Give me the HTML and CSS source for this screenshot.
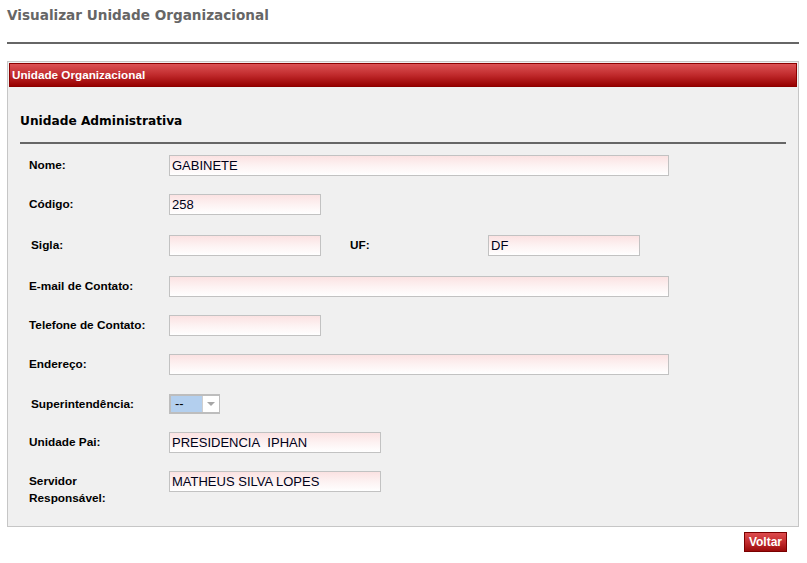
FILE: index.html
```html
<!DOCTYPE html>
<html lang="pt-BR">
<head>
<meta charset="utf-8">
<title>Visualizar Unidade Organizacional</title>
<link rel="stylesheet" href="styles.css">
</head>
<body>
<div class="page">
  <h1 class="title">Visualizar Unidade Organizacional</h1>
  <div class="title-rule"></div>

  <div class="panel">
    <div class="panel-header">Unidade Organizacional</div>
    <div class="panel-body">
      <h2 class="section-title">Unidade Administrativa</h2>
      <div class="section-rule"></div>

      <div class="form">
        <div class="row">
          <label class="label">Nome:</label>
          <div class="input wide">GABINETE</div>
        </div>
        <div class="row">
          <label class="label">Código:</label>
          <div class="input short">258</div>
        </div>
        <div class="row row-loose">
          <label class="label shift">Sigla:</label>
          <div class="input short"></div>
          <label class="label label-uf">UF:</label>
          <div class="input short">DF</div>
        </div>
        <div class="row row-loose">
          <label class="label">E-mail de Contato:</label>
          <div class="input wide"></div>
        </div>
        <div class="row">
          <label class="label">Telefone de Contato:</label>
          <div class="input short"></div>
        </div>
        <div class="row">
          <label class="label">Endereço:</label>
          <div class="input wide"></div>
        </div>
        <div class="row row-select">
          <label class="label shift">Superintendência:</label>
          <div class="select">
            <span class="select-value">--</span>
            <span class="select-arrow"><span class="tri"></span></span>
          </div>
        </div>
        <div class="row">
          <label class="label">Unidade Pai:</label>
          <div class="input medium">PRESIDENCIA&nbsp; IPHAN</div>
        </div>
        <div class="row">
          <label class="label">Servidor<br>Responsável:</label>
          <div class="input medium">MATHEUS SILVA LOPES</div>
        </div>
      </div>
    </div>
  </div>

  <div class="actions">
    <button class="btn" type="button">Voltar</button>
  </div>
</div>
</body>
</html>
```

FILE: styles.css
```css
html, body {
  margin: 0;
  padding: 0;
  background: #ffffff;
}

body {
  font-family: "Liberation Sans", Arial, sans-serif;
  color: #000;
}

.page {
  margin: 0 8px 0 7px;
}

.title {
  margin: 0;
  padding-top: 6px;
  height: 19px;
  font-family: "DejaVu Sans", Verdana, sans-serif;
  font-size: 13.6px;
  line-height: 19px;
  font-weight: bold;
  color: #666666;
}

.title-rule {
  margin-top: 17px;
  height: 2px;
  background: #666666;
}

.panel {
  margin-top: 17px;
  border: 1px solid #c6c6c6;
  background: #f0f0f0;
  padding: 1px;
}

.panel-header {
  height: 22px;
  border: 1px solid #8c0000;
  background: linear-gradient(to bottom, #dc5254 0%, #c02a2c 50%, #970000 100%);
  color: #ffffff;
  font-weight: bold;
  font-size: 11.7px;
  line-height: 22px;
  padding-left: 2px;
}

.panel-body {
  padding: 0 11px 18px 11px;
}

.section-title {
  margin: 0;
  padding-top: 25px;
  height: 18px;
  font-family: "DejaVu Sans", Verdana, sans-serif;
  font-size: 12.2px;
  line-height: 18px;
  font-weight: bold;
  color: #000;
}

.section-rule {
  margin-top: 12px;
  height: 2px;
  background: #666666;
}

.form {
  padding: 11px 0 0 9px;
  display: flex;
  flex-direction: column;
  gap: 18px;
}

.row {
  display: flex;
  align-items: flex-start;
}

.row-loose {
  margin-top: 2px;
}

.row-select {
  margin-top: 1px;
}

.label {
  width: 140px;
  flex: none;
  font-weight: bold;
  font-size: 11.8px;
  line-height: 17px;
  padding-top: 2px;
  color: #000;
}

.label.shift {
  width: 138px;
  padding-left: 2px;
}

.label-uf {
  width: 138px;
  margin-left: 29px;
}

.input {
  height: 19px;
  border: 1px solid #c2c2c2;
  background: linear-gradient(to bottom, #fbe2e2 0%, #fdf2f2 50%, #ffffff 100%);
  font-size: 13px;
  line-height: 19px;
  padding: 0 2px;
  box-sizing: content-box;
  color: #000018;
  white-space: nowrap;
  overflow: hidden;
}

.input.wide { width: 494px; }
.input.short { width: 146px; }
.input.medium { width: 206px; }

.select {
  display: flex;
  width: 48px;
  height: 16px;
  border: 2px solid #bdbdbd;
  border-right-width: 1px;
  background: #b3cfee;
}

.select-value {
  flex: 1;
  font-size: 13px;
  line-height: 16px;
  padding-left: 4px;
  color: #000;
}

.select-arrow {
  width: 16px;
  background: #ffffff;
  border-left: 1px solid #cfcfcf;
  display: flex;
  align-items: center;
  justify-content: center;
}

.tri {
  width: 0;
  height: 0;
  border-left: 4px solid transparent;
  border-right: 4px solid transparent;
  border-top: 4px solid #a6a6a6;
}

.actions {
  display: flex;
  justify-content: flex-end;
  padding: 5px 12px 0 0;
}

.btn {
  height: 20px;
  padding: 0 4px;
  border: 1px solid #7a0000;
  background: linear-gradient(to bottom, #dd4b4d 0%, #c02a2c 55%, #9b0b0b 100%);
  color: #ffffff;
  font-family: "Liberation Sans", Arial, sans-serif;
  font-weight: bold;
  font-size: 12px;
  line-height: 18px;
  cursor: pointer;
}
```
